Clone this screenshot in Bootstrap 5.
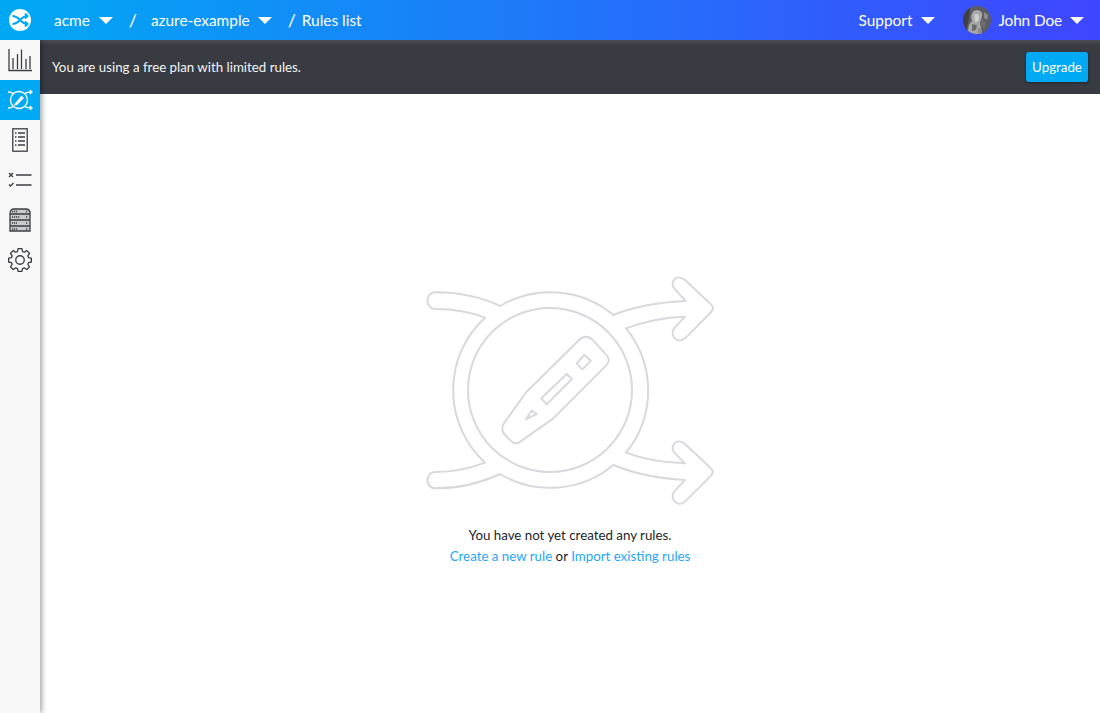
<!DOCTYPE html>
<html lang="en">
<head>
<meta charset="UTF-8">
<meta name="viewport" content="width=device-width, initial-scale=1.0">
<title>Rules list</title>
<link href="https://cdn.jsdelivr.net/npm/bootstrap@5.3.0/dist/css/bootstrap.min.css" rel="stylesheet">
<style>
    html, body { height: 100%; }
    body { font-family: "Lato", "Liberation Sans", sans-serif; font-size: 13.3px; color: #212529; overflow: hidden; }
    .top-bar { height: 40px; background: linear-gradient(90deg, #00a9f4 0%, #3f45ff 100%); color: #fff; font-size: 15.4px; position: relative; z-index: 3; }
    .top-logo { width: 40px; }
    .top-first { margin-left: 14px; }
    .top-next { margin-left: 14px; }
    .top-last { margin-left: 6px; }
    .top-name { margin-left: 7px; letter-spacing: -.12px; }
    .top-sep { font-size: 18px; }
    .top-link, .top-last { color: #fff; text-decoration: none; padding-top: 1px; }
    .top-avatar { margin-left: 28px; }
    .caret-down { display: inline-block; width: 0; height: 0; margin-left: 9px; border-left: 7px solid transparent; border-right: 7px solid transparent; border-top: 7px solid #fff; }
    .caret-end { margin-left: 8px; }
    .side-bar { width: 40px; background: #f8f8f8; box-shadow: 2px 0 5px rgba(0,0,0,.35); position: relative; z-index: 2; }
    .side-item { height: 40px; }
    .side-item.is-active { background: #00a9f4; }
    .plan-bar { height: 54px; background: #383b42; color: #f4f4f4; padding: 0 12px; box-shadow: inset 0 6px 5px -4px rgba(255,255,255,.12); }
    .plan-text { padding-top: 1px; }
    .btn-upgrade { background: #00a9f4; color: #fff; font-size: 13.3px; height: 30px; padding: 2px 6px 0; width: 62px; border: 0; border-radius: 3px; box-shadow: 0 1px 3px rgba(0,0,0,.4); }
    .main-col { min-width: 0; }
    .empty-box { padding-top: 176px; }
    .empty-text { line-height: 21px; margin-top: 15px; }
    .empty-text a { color: #1ea7f8; text-decoration: none; }
    .page-row { height: 673px; }
</style>
</head>
<body>
<div class="top-bar d-flex align-items-center">
    <div class="top-logo d-flex justify-content-center">
        <svg width="24" height="24" viewBox="0 0 24 24">
            <circle cx="12" cy="12" r="11" fill="#fff"/>
            <path d="M4.500 8c4 0 5 1.500 7.500 4s3.500 4 7.500 4M4.500 16c4 0 5-1.500 7.500-4s3.500-4 7.500-4M17 5.500 19.500 8 17 10.500M17 13.500l2.500 2.500-2.500 2.500" fill="none" stroke="#00a9f4" stroke-width="2"/>
        </svg>
    </div>
    <a href="#" class="top-link top-first">acme</a>
    <span class="caret-down"></span>
    <span class="top-sep ms-3">/</span>
    <a href="#" class="top-link top-next">azure-example</a>
    <span class="caret-down caret-end"></span>
    <span class="top-sep ms-3">/</span>
    <span class="top-last">Rules list</span>
    <div class="ms-auto d-flex align-items-center">
        <a href="#" class="top-link">Support</a>
        <span class="caret-down"></span>
        <svg class="top-avatar" width="28" height="28" viewBox="0 0 28 28">
            <defs><clipPath id="avatarClip"><circle cx="14" cy="14" r="14"/></clipPath></defs>
            <g clip-path="url(#avatarClip)">
                <rect width="28" height="28" fill="#5c5d60"/>
                <path d="M0 6 7 2 6 12 3 26 0 24z" fill="#3f4043"/>
                <path d="M5 28c0-7 1-10 4-13-2-5 0-11 5-11 4 0 6 3 5 7l-2 6 2 11z" fill="#a8a8a8"/>
                <path d="M12 8c2-1 4 0 4 3 0 3-1 5-3 5s-2-6-1-8z" fill="#d0d0d0"/>
                <path d="M9 18l5 1-1 5-4 1zM19 13l4 3-1 7-4-2z" fill="#6c6c6e"/>
                <path d="M21 6l4 3-1 5-3-2zM15 22l4 1-1 5h-3z" fill="#8d8d8f"/>
            </g>
        </svg>
        <a href="#" class="top-link top-name">John Doe</a>
        <span class="caret-down caret-end me-3"></span>
    </div>
</div>
<div class="d-flex page-row">
    <div class="side-bar flex-shrink-0">
        <div class="side-item d-flex align-items-center justify-content-center">
            <svg width="24" height="24" viewBox="0 0 24 24" fill="none" stroke="#3a3d44" stroke-width="1.300">
                <path d="M1 1v21.500h23M5 21V10M9.500 21V6M13.500 21V1.500M18 21V11M22 21V8"/>
            </svg>
        </div>
        <div class="side-item is-active d-flex align-items-center justify-content-center">
            <svg width="25" height="20" viewBox="0 0 25 20" fill="none" stroke="#fff" stroke-width="1.300">
                <circle cx="11" cy="10" r="8.500"/>
                <path d="M0 2c3 0 4 .5 5.500 1.500M16.500 3.500C18.500 2.300 20 2 24 2M21.800 0 24 2l-2.200 2M0 18c3 0 4-.5 5.500-1.500M16.500 16.500c2 1.200 3.500 1.500 7.500 1.500M21.800 16l2.200 2-2.200 2"/>
                <path d="M6.500 14 13.500 5.500l2.500 2.500-7 7-3 .5z" fill="#fff" stroke="none"/>
            </svg>
        </div>
        <div class="side-item d-flex align-items-center justify-content-center">
            <svg width="16" height="24" viewBox="0 0 16 24" fill="none" stroke="#3a3d44" stroke-width="1.300">
                <rect x=".8" y=".8" width="14.400" height="22.400"/>
                <path d="M3 5h1.500M6 5h7M3 9h1.500M6 9h7M3 13h1.500M6 13h7M3 17h1.500M6 17h7"/>
            </svg>
        </div>
        <div class="side-item d-flex align-items-center justify-content-center">
            <svg width="24" height="16" viewBox="0 0 24 16" fill="none" stroke="#3a3d44" stroke-width="1.300">
                <path d="M1 1l4 4M5 1 1 5M8 3h15.500M1 12.500l1.500 1.500L5.500 11M8 13h15.500"/>
            </svg>
        </div>
        <div class="side-item d-flex align-items-center justify-content-center">
            <svg width="22" height="24" viewBox="0 0 22 24" fill="none" stroke="#3a3d44" stroke-width="1.300">
                <path d="M1 5c0-3 2-4 4-4h12c2 0 4 1 4 4v18H1z" fill="#c9cacc"/>
                <path d="M1 6h20M1 12h20M1 18h20" />
                <path d="M3 3.500h6M3 9h8M3 15h5M3 21h5M17 3.500h2M17 9h2M17 15h2M17 21h2" stroke-dasharray="1.200 .8"/>
            </svg>
        </div>
        <div class="side-item d-flex align-items-center justify-content-center">
            <svg width="24" height="24" viewBox="-.7 .4 25.400 25.400" fill="none" stroke="#3a3d44" stroke-width="1.400" stroke-linejoin="round">
                <circle cx="12" cy="13.100" r="4.500"/>
                <path d="M10 1h4l.7 3.200 1.700.7 2.800-1.700 2.800 2.800-1.700 2.800.7 1.700 3 .7v4l-3 .7-.7 1.700 1.700 2.800-2.800 2.800-2.800-1.700-1.700.7-.7 3h-4l-.7-3-1.700-.7-2.800 1.700-2.800-2.800 1.700-2.800-.7-1.700-3-.7v-4l3-.7.7-1.700-1.700-2.800 2.800-2.800 2.800 1.700 1.700-.7z"/>
            </svg>
        </div>
    </div>
    <div class="main-col flex-grow-1 d-flex flex-column">
        <div class="plan-bar d-flex align-items-center justify-content-between flex-shrink-0">
            <span class="plan-text">You are using a free plan with limited rules.</span>
            <button type="button" class="btn btn-upgrade">Upgrade</button>
        </div>
        <div class="empty-box text-center">
            <svg width="300" height="240" viewBox="0 0 900 720" fill="none" stroke="#d8d9dd" stroke-width="6" stroke-linejoin="round">
                <circle cx="390" cy="360" r="246"/>
                <path d="M240 108C180 80 120 67 47 67C14 67 14 117 47 117C100 117 150 125 195 143A295 295 0 0 0 195 578C150 595 100 606 47 606C14 606 14 655 47 655C120 655 180 640 240 612A295 295 0 0 0 580 585C640 610 710 625 795 630L765 662C745 682 770 715 795 695L868 622C882 608 882 604 868 590L795 522C770 500 745 530 765 550L795 580C730 578 670 568 618 548A295 295 0 0 0 618 175C670 155 730 142 795 140L765 172C745 192 770 225 795 205L868 132C882 118 882 112 868 98L795 30C770 8 745 38 765 58L797 93C710 97 640 110 580 135A295 295 0 0 0 240 108Z"/>
                <path d="M320 365 475 212C490 197 505 197 520 212L555 250C570 265 570 275 555 290L400 445 305 512C290 525 280 522 265 505L253 492C243 480 245 470 253 458Z"/>
                <path d="M440 312 456 327 380 403 364 385ZM493 255 513 272 487 298 470 280ZM335 422 350 432 318 448Z"/>
            </svg>
            <div class="empty-text">
                <div>You have not yet created any rules.</div>
                <div><a href="#">Create a new rule</a> or <a href="#">Import existing rules</a></div>
            </div>
        </div>
    </div>
</div>
<script src="https://cdn.jsdelivr.net/npm/bootstrap@5.3.0/dist/js/bootstrap.bundle.min.js"></script>
</body>
</html>
